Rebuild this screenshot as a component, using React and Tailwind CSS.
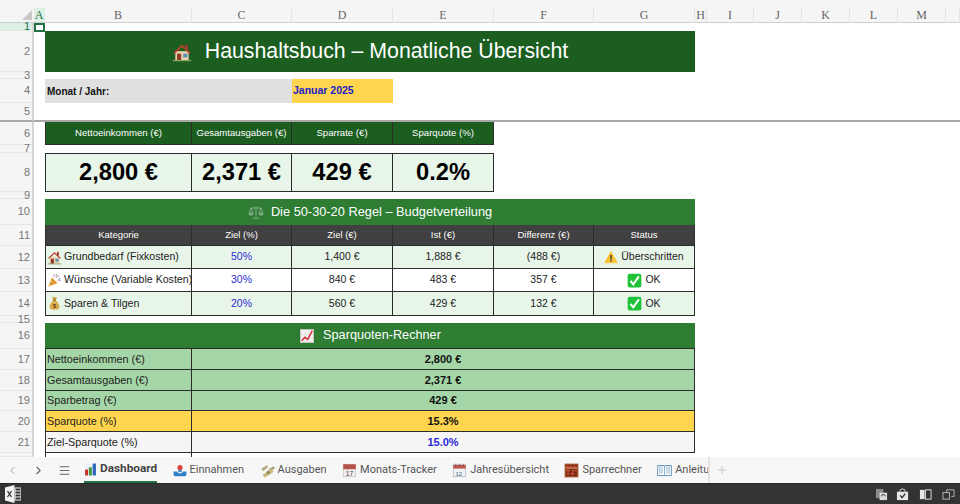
import React from "react";
import { ChevronLeft, ChevronRight, Menu, Plus } from "lucide-react";

const COLUMNS = [
  { label: "A", active: true },
  { label: "B" },
  { label: "C" },
  { label: "D" },
  { label: "E" },
  { label: "F" },
  { label: "G" },
  { label: "H" },
  { label: "I" },
  { label: "J" },
  { label: "K" },
  { label: "L" },
  { label: "M" },
  { label: "" },
];

const House = ({ className }) => (
  <svg viewBox="0 0 24 24" className={className}>
    <rect x="4" y="11" width="16" height="11" fill="#e9d3ac" />
    <path d="M1.500 13 12 3l10.500 10-1.800 1L12 6 3.300 14z" fill="#b8442f" />
    <rect x="16" y="3" width="3" height="6" fill="#a33a2a" />
    <rect x="6" y="14" width="5" height="8" fill="#8f3b2a" />
    <rect x="13.500" y="14" width="5" height="4.500" fill="#5b8fb8" />
    <rect x="1" y="21.500" width="22" height="1.500" fill="#8fa36a" />
  </svg>
);

const Scales = ({ className }) => (
  <svg viewBox="0 0 24 24" className={className} fill="none" stroke="#8fb596" strokeWidth="1.300">
    <path d="M12 3v17M7 21.500h10M4 6h16" />
    <path d="M4.500 6 1.500 14h6zM19.500 6l-3 8h6z" />
    <path d="M1.500 14a3 3 0 0 0 6 0zM16.500 14a3 3 0 0 0 6 0z" fill="#5f9f68" />
  </svg>
);

const ChartUp = ({ className }) => (
  <svg viewBox="0 0 24 24" className={className}>
    <rect x="2" y="2" width="20" height="20" fill="#f4f1f1" stroke="#c9c4c4" />
    <path d="M3 9h18M3 15h18M9 3v18M15 3v18" stroke="#dcdcdc" strokeWidth="0.800" />
    <path d="M4 19l5-5 4 3 7-13" fill="none" stroke="#d8283a" strokeWidth="2.200" />
  </svg>
);

const Popper = ({ className }) => (
  <svg viewBox="0 0 24 24" className={className}>
    <path d="M2 22 8 7l9 9z" fill="#e8ad3c" />
    <path d="M5 15l4 4M7 10l7 7" stroke="#c9552e" strokeWidth="1.500" />
    <path d="M11 6c1-2 1-3 0-4M17 12c2-1 3-1 5 0M14 8c1-2 3-3 5-3" fill="none" stroke="#c75f9f" strokeWidth="1.500" />
    <circle cx="20" cy="9" r="1.200" fill="#4a90c4" />
    <circle cx="15" cy="3" r="1.200" fill="#5aa85a" />
  </svg>
);

const MoneyBag = ({ className }) => (
  <svg viewBox="0 0 24 24" className={className}>
    <path d="M8 2h8l-2 5h-4z" fill="#c99a3c" />
    <path d="M10 7h4c4 3 6 7 6 10 0 4-3 5-8 5s-8-1-8-5c0-3 2-7 6-10z" fill="#dcae52" />
    <rect x="9.500" y="6" width="5" height="1.600" fill="#8a6420" />
    <text x="12" y="19" textAnchor="middle" fontSize="10" fontWeight="700" fill="#5f4310" fontFamily="Liberation Sans">$</text>
  </svg>
);

const Warning = ({ className }) => (
  <svg viewBox="0 0 24 24" className={className}>
    <path d="M12 2.500 23 22H1z" fill="#fbc02d" stroke="#fbc02d" strokeLinejoin="round" />
    <rect x="10.800" y="8.500" width="2.400" height="8" fill="#3a3a3a" />
    <rect x="10.800" y="17.500" width="2.400" height="2.400" fill="#3a3a3a" />
  </svg>
);

const CheckBox = ({ className }) => (
  <svg viewBox="0 0 24 24" className={className}>
    <rect x="1" y="1" width="22" height="22" rx="3.500" fill="#1fc33a" />
    <path d="M5.500 12.500 10 18 19 5.500" fill="none" stroke="#ffffff" strokeWidth="3.200" />
  </svg>
);

const BarsIcon = ({ className }) => (
  <svg viewBox="0 0 24 24" className={className}>
    <rect x="1" y="1" width="22" height="22" fill="#eef1f5" />
    <rect x="2" y="12" width="5.500" height="11" fill="#c92f2f" />
    <rect x="9" y="8" width="5.500" height="15" fill="#3f9a3f" />
    <rect x="16" y="1" width="6" height="22" fill="#2c66b8" />
  </svg>
);

const InboxIcon = ({ className }) => (
  <svg viewBox="0 0 24 24" className={className}>
    <path d="M1 13h6l2 3h6l2-3h6v5a3 3 0 0 1-3 3H4a3 3 0 0 1-3-3z" fill="#2f7fc9" />
    <path d="M9 8h6v6H9z" fill="#3b93d8" />
    <circle cx="12" cy="6" r="4.500" fill="#d9453a" />
  </svg>
);

const MoneyWings = ({ className }) => (
  <svg viewBox="0 0 24 24" className={className}>
    <path d="M2 9l9-6 2 4-8 6z" fill="#b9b08a" />
    <path d="M22 5l-8 5 2 4 8-6z" fill="#a8a27c" />
    <path d="M4 19 18 9l4 5-14 9z" fill="#c8b878" />
    <circle cx="13" cy="15" r="2.500" fill="#8a8a5a" />
  </svg>
);

const CalendarIcon = ({ className }) => (
  <svg viewBox="0 0 24 24" className={className}>
    <rect x="2" y="2" width="20" height="20" fill="#f2eeee" stroke="#bbb" />
    <rect x="2" y="2" width="20" height="8" fill="#b5524a" />
    <text x="12" y="20.500" textAnchor="middle" fontSize="10.500" fill="#444" fontFamily="Liberation Sans">17</text>
  </svg>
);

const SpiralCalendar = ({ className }) => (
  <svg viewBox="0 0 24 24" className={className}>
    <rect x="2" y="3" width="20" height="19" fill="#eef2f4" stroke="#aab" />
    <rect x="2" y="3" width="20" height="6" fill="#c2574c" />
    <path d="M6 1v5M12 1v5M18 1v5" stroke="#666" strokeWidth="1.200" />
    <text x="11" y="20" textAnchor="middle" fontSize="9.500" fill="#3a6a8a" fontFamily="Liberation Sans">12</text>
  </svg>
);

const Abacus = ({ className }) => (
  <svg viewBox="0 0 24 24" className={className}>
    <rect x="1" y="1" width="22" height="22" fill="#a5502a" />
    <rect x="3" y="3" width="18" height="18" fill="#7a2f1c" />
    <path d="M3 8h18" stroke="#e8c07a" strokeWidth="1.600" />
    <path d="M4 6h3M9 6h3M15 6h4M4 12h5M13 12h3M18 12h2M5 17h3M11 17h5" stroke="#e2503a" strokeWidth="2.800" />
  </svg>
);

const BookIcon = ({ className }) => (
  <svg viewBox="0 0 24 24" className={className}>
    <path d="M1 4h10l1 2 1-2h10v16H13l-1 1-1-1H1z" fill="#ffffff" stroke="#4a7fae" strokeWidth="1.300" />
    <path d="M12 6v15M4.500 5v12M8 5v12M16 5v12M19.500 5v12" stroke="#4a7fae" />
  </svg>
);

const BUDGET_ROWS = [
  {
    no: 12,
    bg: "bg-[#e8f5e9]",
    icon: <House className="w-[15px] h-[15px] shrink-0" />,
    name: "Grundbedarf (Fixkosten)",
    pct: "50%",
    goal: "1,400 €",
    actual: "1,888 €",
    diff: "(488 €)",
    status: "Überschritten",
    statusIcon: <Warning className="w-[14px] h-[14px] shrink-0" />,
  },
  {
    no: 13,
    bg: "bg-white",
    icon: <Popper className="w-[15px] h-[15px] shrink-0" />,
    name: "Wünsche (Variable Kosten)",
    pct: "30%",
    goal: "840 €",
    actual: "483 €",
    diff: "357 €",
    status: "OK",
    statusIcon: <CheckBox className="w-[15px] h-[15px] shrink-0" />,
  },
  {
    no: 14,
    bg: "bg-[#e8f5e9]",
    icon: <MoneyBag className="w-[15px] h-[15px] shrink-0" />,
    name: "Sparen & Tilgen",
    pct: "20%",
    goal: "560 €",
    actual: "429 €",
    diff: "132 €",
    status: "OK",
    statusIcon: <CheckBox className="w-[15px] h-[15px] shrink-0" />,
  },
];

const CALC_ROWS = [
  { no: 17, label: "Nettoeinkommen (€)", value: "2,800 €", bg: "bg-[#a5d6a7]", color: "text-[#111]" },
  { no: 18, label: "Gesamtausgaben (€)", value: "2,371 €", bg: "bg-[#a5d6a7]", color: "text-[#111]" },
  { no: 19, label: "Sparbetrag (€)", value: "429 €", bg: "bg-[#a5d6a7]", color: "text-[#111]" },
  { no: 20, label: "Sparquote (%)", value: "15.3%", bg: "bg-[#ffd54f]", color: "text-[#111]" },
  { no: 21, label: "Ziel-Sparquote (%)", value: "15.0%", bg: "bg-[#f5f5f5]", color: "text-[#2a2ad8]" },
];

const TABS = [
  { label: "Dashboard", icon: <BarsIcon className="w-[13px] h-[13px]" />, active: true },
  { label: "Einnahmen", icon: <InboxIcon className="w-[14px] h-[14px]" /> },
  { label: "Ausgaben", icon: <MoneyWings className="w-[15px] h-[15px]" /> },
  { label: "Monats-Tracker", icon: <CalendarIcon className="w-[15px] h-[15px]" /> },
  { label: "Jahresübersicht", icon: <SpiralCalendar className="w-[15px] h-[15px]" /> },
  { label: "Sparrechner", icon: <Abacus className="w-[15px] h-[15px]" /> },
];

function RowNum({ n, active, line }) {
  return (
    <div
      className={`col-start-1 flex items-center justify-end pr-[2px] text-[11px] text-[#777] border-r-2 border-r-[#d4d4d4] ${
        active ? "bg-[#dcefe3] text-[#217346]" : "bg-[#f5f5f5]"
      } ${line ? "border-b-2 border-b-[#a8a8a8]" : "border-b border-b-[#e6e6e6]"}`}
    >
      {n}
    </div>
  );
}

function Cell({ className = "", children }) {
  return (
    <div className={`flex items-center justify-center border-r border-b border-[#2b2b2b] overflow-hidden whitespace-nowrap ${className}`}>
      {children}
    </div>
  );
}

export default function App() {
  return (
    <div className="w-[960px] h-[504px] flex flex-col overflow-hidden bg-white font-['Liberation_Sans',Arial,sans-serif]">
      <div className="grid flex-1 overflow-hidden grid-cols-[34px_11px_147px_100px_101px_101px_100px_101px_12px_47px_48px_48px_48px_48px_1fr] grid-rows-[8px_15px_8px_41px_7px_24px_19px_23px_8px_39px_7px_26px_21px_23px_23px_24px_7px_26px_21px_21px_20px_21px_21px_4px]">
        {/* Column letters */}
        <div className="col-span-full bg-[#f5f5f5]" />
        <div className="col-start-1 bg-[#f5f5f5] border-b border-[#cfcfcf] flex items-end justify-end pr-[2px] pb-[2px]">
          <svg viewBox="0 0 10 10" className="w-[10px] h-[10px]">
            <path d="M10 0v10H0z" fill="#c9c9c9" />
          </svg>
        </div>
        {COLUMNS.map((col, i) => (
          <div
            key={i}
            className={`flex items-center justify-center font-['Liberation_Serif',serif] text-[12px] border-b border-[#cfcfcf] border-r ${
              col.active
                ? "bg-[#dcefe3] text-[#217346] border-r-transparent"
                : "bg-[#f5f5f5] text-[#666] border-r-[#e4e4e4]"
            }`}
          >
            {col.label}
          </div>
        ))}

        {/* Row 1 with the selected cell */}
        <RowNum n={1} active />
        <div className="border-2 border-[#217346] h-[9px]" />

        {/* Title */}
        <RowNum n={2} />
        <div className="col-start-3 col-span-6 bg-[#1b5e20] flex items-center justify-center gap-[13px]">
          <House className="w-[20px] h-[20px]" />
          <span className="text-white text-[21.3px] leading-none">Haushaltsbuch – Monatliche Übersicht</span>
        </div>

        <RowNum n={3} />

        {/* Month */}
        <RowNum n={4} />
        <div className="col-start-3 col-span-2 bg-[#e0e0e0] flex items-center pl-[2px] text-[10px] font-bold text-[#111]">
          Monat / Jahr:
        </div>
        <div className="bg-[#ffd54f] flex items-center pl-[1px] text-[10.5px] font-bold text-[#2020c8]">Januar 2025</div>

        {/* Frozen pane line */}
        <RowNum n={5} line />
        <div className="col-start-2 col-span-14 border-b-2 border-[#a8a8a8]" />

        {/* KPI tiles */}
        <RowNum n={6} />
        {["Nettoeinkommen (€)", "Gesamtausgaben (€)", "Sparrate (€)", "Sparquote (%)"].map((label, i) => (
          <Cell key={label} className={`bg-[#1b5e20] text-white text-[9.6px] ${i === 0 ? "col-start-3 border-l" : ""}`}>
            {label}
          </Cell>
        ))}
        <RowNum n={7} />
        <RowNum n={8} />
        {["2,800 €", "2,371 €", "429 €", "0.2%"].map((value, i) => (
          <Cell
            key={value}
            className={`bg-[#e8f5e9] border-t text-black text-[23.7px] font-bold ${i === 0 ? "col-start-3 border-l" : ""}`}
          >
            {value}
          </Cell>
        ))}
        <RowNum n={9} />

        {/* 50-30-20 rule */}
        <RowNum n={10} />
        <div className="col-start-3 col-span-6 bg-[#2e7d32] flex items-center justify-center gap-[7px] text-white text-[12.8px]">
          <Scales className="w-[16px] h-[16px]" />
          <span>Die 50-30-20 Regel – Budgetverteilung</span>
        </div>
        <RowNum n={11} />
        {["Kategorie", "Ziel (%)", "Ziel (€)", "Ist (€)", "Differenz (€)", "Status"].map((label, i) => (
          <Cell key={label} className={`bg-[#404040] text-white text-[9.5px] ${i === 0 ? "col-start-3 border-l" : ""}`}>
            {label}
          </Cell>
        ))}
        {BUDGET_ROWS.map((row) => (
          <React.Fragment key={row.no}>
            <RowNum n={row.no} />
            <Cell className={`${row.bg} col-start-3 border-l justify-start pl-[1px] gap-[2px] text-[10.6px] text-[#222]`}>
              {row.icon}
              <span>{row.name}</span>
            </Cell>
            <Cell className={`${row.bg} text-[10.5px] text-[#2a2ad8]`}>{row.pct}</Cell>
            <Cell className={`${row.bg} text-[10.5px] text-[#222]`}>{row.goal}</Cell>
            <Cell className={`${row.bg} text-[10.5px] text-[#222]`}>{row.actual}</Cell>
            <Cell className={`${row.bg} text-[10.5px] text-[#222]`}>{row.diff}</Cell>
            <Cell className={`${row.bg} gap-[3px] text-[10.5px] text-[#222]`}>
              {row.statusIcon}
              <span>{row.status}</span>
            </Cell>
          </React.Fragment>
        ))}
        <RowNum n={15} />

        {/* Savings rate calculator */}
        <RowNum n={16} />
        <div className="col-start-3 col-span-6 bg-[#2e7d32] border-b border-[#2b2b2b] flex items-center justify-center gap-[8px] text-white text-[12.7px]">
          <ChartUp className="w-[16px] h-[16px]" />
          <span>Sparquoten-Rechner</span>
        </div>
        {CALC_ROWS.map((row) => (
          <React.Fragment key={row.no}>
            <RowNum n={row.no} />
            <Cell className={`${row.bg} col-start-3 border-l justify-start pl-[1px] text-[10.8px] text-[#222]`}>{row.label}</Cell>
            <Cell className={`${row.bg} col-span-5 text-[11px] font-bold ${row.color}`}>{row.value}</Cell>
          </React.Fragment>
        ))}
        <RowNum />
        <div className="col-start-3 border-l border-r border-[#2b2b2b]" />
      </div>

      {/* Sheet tabs */}
      <div className="h-[26px] shrink-0 bg-[#f7f7f7] flex items-stretch font-['Roboto',sans-serif] text-[11px] text-[#555]">
        <div className="w-[84px] flex items-center shrink-0 text-[#666]">
          <ChevronLeft className="w-[13px] h-[13px] ml-[6px] text-[#c4c4c4]" />
          <ChevronRight className="w-[13px] h-[13px] ml-[13px]" />
          <Menu className="w-[13px] h-[13px] ml-[13px]" />
        </div>
        <div className="flex gap-[15.4px] w-[626px] overflow-hidden shrink-0 border-r-2 border-[#e2e2e2]">
          {TABS.map((tab) => (
            <div
              key={tab.label}
              className={`flex items-center gap-[3px] shrink-0 border-b-2 ${
                tab.active
                  ? "border-[#217346] font-bold text-[11.8px] text-[#444]"
                  : "border-transparent pt-[3px]"
              }`}
            >
              {tab.icon}
              <span>{tab.label}</span>
            </div>
          ))}
          <div className="flex items-center gap-[3px] shrink-0 border-b-2 border-transparent pt-[3px]">
            <BookIcon className="w-[15px] h-[15px]" />
            <span>Anleitung</span>
          </div>
        </div>
        <div className="flex items-center pl-[6px]">
          <Plus className="w-[12px] h-[12px] text-[#c4c4c4]" />
        </div>
      </div>

      {/* Status bar */}
      <div className="h-[21px] shrink-0 bg-[#333333] border-t border-[#262626] flex items-center justify-between pl-[5px] pr-[5px]">
        <svg viewBox="0 0 16 18" className="w-[16px] h-[18px]">
          <path d="M0 2.500 9.500 0v18L0 15.500z" fill="#f2f2f2" />
          <rect x="10" y="3" width="6" height="12" fill="none" stroke="#f2f2f2" />
          <path d="M10 6h6M10 9h6M10 12h6" stroke="#f2f2f2" />
          <path d="M2.500 6 6.500 12M6.500 6 2.500 12" stroke="#333" strokeWidth="1.300" />
        </svg>
        <div className="flex items-center gap-[8px] text-[#e6e6e6]">
          <svg viewBox="0 0 14 14" className="w-[13px] h-[13px]">
            <rect x="1" y="1" width="8" height="10" fill="#8a8a8a" />
            <rect x="5" y="5" width="8" height="8" fill="#dcdcdc" />
            <path d="M7 9a2 2 0 1 1 4 0" fill="none" stroke="#333" />
          </svg>
          <svg viewBox="0 0 14 14" className="w-[13px] h-[13px]">
            <path d="M1 4h12v9H1z" fill="#e6e6e6" />
            <path d="M4 4a3 3 0 0 1 6 0" fill="none" stroke="#e6e6e6" />
            <path d="M4.500 8l2 2.500L10 6" fill="none" stroke="#333" strokeWidth="1.500" />
          </svg>
          <svg viewBox="0 0 14 14" className="w-[13px] h-[13px] mx-[2px]">
            <rect x="1" y="2" width="5" height="10" fill="#e6e6e6" />
            <rect x="7" y="2" width="6" height="10" fill="none" stroke="#e6e6e6" />
          </svg>
          <svg viewBox="0 0 14 14" className="w-[13px] h-[13px]">
            <rect x="1" y="5" width="7" height="7" fill="none" stroke="#bdbdbd" />
            <path d="M5 5V2h8v7h-3" fill="none" stroke="#bdbdbd" />
          </svg>
        </div>
      </div>
    </div>
  );
}
